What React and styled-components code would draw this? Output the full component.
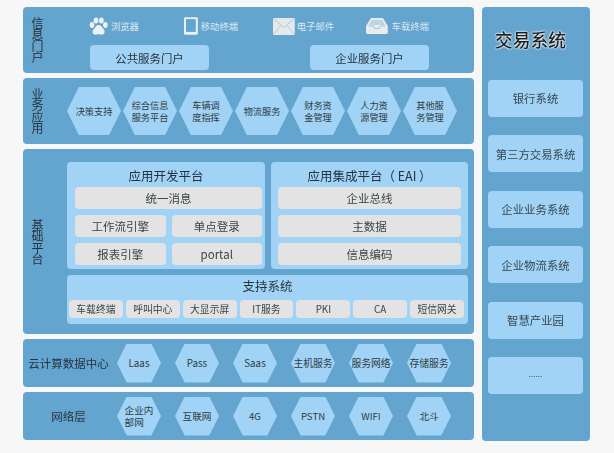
import React from "react";
import styled, { createGlobalStyle } from "styled-components";

const Global = createGlobalStyle`
  html, body { margin: 0; padding: 0; background: #f7f7f7; }
  body { width: 614px; height: 453px; overflow: hidden; font-family: "Noto Sans CJK SC", "Noto Sans", sans-serif; color: #2f3b44; }
`;

const Page = styled.div`
  display: flex;
  gap: 8px;
  padding: 7px 0 0 23px;
  width: 614px;
  height: 453px;
  box-sizing: border-box;
  filter: blur(0.35px);
`;
const LeftColumn = styled.div`
  width: 451px;
  display: flex;
  flex-direction: column;
  gap: 5px;
`;
const Band = styled.section`
  height: ${(p) => p.$h}px;
  box-sizing: border-box;
  background: #64a5cf;
  border-radius: 4px;
  display: flex;
  align-items: ${(p) => p.$align || "stretch"};
`;
const SideLabel = styled.div`
  width: 44px;
  flex: none;
  align-self: stretch;
  display: flex;
  align-items: center;
  justify-content: center;
  box-sizing: border-box;
  font-size: 12px;
  letter-spacing: -0.5px;
  line-height: 12px;
  writing-mode: vertical-rl;
  text-orientation: upright;
  color: #26333d;
  padding-right: 16px;
`;
const WideLabel = styled.div`
  width: 94px;
  flex: none;
  padding-right: 3px;
  box-sizing: border-box;
  text-align: center;
  font-size: 11.5px;
  color: #26333d;
  white-space: nowrap;
`;
const PortalBody = styled.div`
  flex: 1;
  padding: 9px 0 0 22px;
`;
const ChannelRow = styled.div`
  display: flex;
  height: 29px;
  align-items: flex-start;
`;
const Channel = styled.div`
  display: flex;
  align-items: center;
  gap: ${(p) => p.$gap}px;
  width: ${(p) => p.$w}px;
  margin-left: ${(p) => p.$ml}px;
  height: 20px;
  font-size: 9.3px;
  color: #dbe8f1;
  white-space: nowrap;
`;
const PortalRow = styled.div`
  display: flex;
  gap: 101px;
  padding-left: 1px;
`;
const PortalButton = styled.div`
  width: 119px;
  height: 25px;
  background: #a0d3f6;
  border-radius: 4px;
  display: flex;
  align-items: center;
  justify-content: center;
  font-size: 11.4px;
  color: #27333c;
`;
const HexRow = styled.div`
  display: flex;
  align-items: center;
  gap: ${(p) => p.$gap}px;
`;
const Hex = styled.div`
  width: ${(p) => p.$w}px;
  height: ${(p) => p.$h}px;
  flex: none;
  background: #a0d3f6;
  clip-path: polygon(22% 0, 78% 0, 100% 50%, 78% 100%, 22% 100%, 0 50%);
  display: flex;
  align-items: center;
  justify-content: center;
  text-align: ${(p) => (p.$left ? "left" : "center")};
  font-size: ${(p) => p.$size}px;
  line-height: 12px;
  color: #2f3b44;
  white-space: pre-line;
`;
const FoundationBody = styled.div`
  flex: 1;
  padding: 13px 6px 0 0;
  display: flex;
  flex-direction: column;
  gap: 6px;
`;
const PlatformRow = styled.div`
  display: flex;
  gap: 6px;
`;
const Platform = styled.div`
  width: ${(p) => p.$w}px;
  height: 107px;
  box-sizing: border-box;
  background: #a0d3f6;
  border-radius: 4px;
  padding: ${(p) => p.$pad};
`;
const PanelTitle = styled.div`
  height: 26px;
  margin-bottom: -1px;
  padding-right: ${(p) => p.$inset || 0}px;
  display: flex;
  align-items: center;
  justify-content: center;
  font-size: 12.5px;
  color: #27333c;
  white-space: pre;
`;
const Stack = styled.div`
  display: grid;
  grid-template-columns: 1fr 1fr;
  gap: 6px;
`;
const Tile = styled.div`
  grid-column: ${(p) => (p.$wide ? "1 / -1" : "auto")};
  height: 22px;
  background: #e3e3e3;
  border-radius: 4px;
  display: flex;
  align-items: center;
  justify-content: center;
  font-size: 11.5px;
  color: #3a4347;
`;
const SupportPanel = styled.div`
  width: 401px;
  height: 49px;
  box-sizing: border-box;
  background: #a0d3f6;
  border-radius: 4px;
`;
const SupportTitle = styled(PanelTitle)`
  height: 21px;
  margin-bottom: 4px;
`;
const SupportRow = styled.div`
  display: flex;
  gap: 3px;
  padding: 0 4px 0 2px;
`;
const Chip = styled.div`
  flex: 1;
  height: 18px;
  background: #e3e3e3;
  border-radius: 4px;
  display: flex;
  align-items: center;
  justify-content: center;
  font-size: 9.8px;
  color: #3a4347;
  white-space: nowrap;
`;
const RightColumn = styled.aside`
  width: 108px;
  height: 434px;
  background: #64a5cf;
  border-radius: 4px;
  box-sizing: border-box;
  padding: 0 7px 0 6px;
`;
const RightTitle = styled.h2`
  margin: 0;
  height: 72.5px;
  padding: 0 10px 9px 0;
  box-sizing: border-box;
  display: flex;
  align-items: center;
  justify-content: center;
  font-size: 17.7px;
  font-weight: 500;
  color: #1d1f21;
  text-shadow: 0 0 2px #fff, 0 0 2px #fff, 0 0 1px #fff;
`;
const RightStack = styled.div`
  display: flex;
  flex-direction: column;
  gap: 18.5px;
`;
const RightItem = styled.div`
  height: 37px;
  background: #a0d3f6;
  border-radius: 4px;
  display: flex;
  align-items: center;
  justify-content: center;
  font-size: ${(p) => (p.$dots ? 8 : 11.4)}px;
  padding-bottom: ${(p) => (p.$dots ? 4 : 0)}px;
  box-sizing: border-box;
  color: #38464f;
  white-space: nowrap;
`;

const Paw = () => (
  <svg width="19" height="19" viewBox="0 0 19 19" fill="#eef1f3">
    <ellipse cx="3" cy="8" rx="2.3" ry="3" />
    <ellipse cx="7" cy="3.4" rx="2.4" ry="3" />
    <ellipse cx="12.4" cy="3.4" rx="2.4" ry="3" />
    <ellipse cx="16.4" cy="8" rx="2.3" ry="3" />
    <path d="M9.6 8c2.2 0 3.2 2 4.4 3.4 1.4 1.6 2 2.6 1.4 4.4-.6 1.8-2.6 2-3.6 1.8-1-.2-1.6-.4-2.2-.4s-1.4.2-2.4.4c-1.4.2-3-.2-3.5-1.8-.5-1.8.3-3 1.7-4.4C6.6 10 7.4 8 9.6 8z" />
  </svg>
);
const Tablet = () => (
  <svg width="14" height="18" viewBox="0 0 14 18">
    <rect x="0" y="0" width="14" height="18" rx="1.5" fill="#eef1f3" />
    <rect x="2" y="2" width="10" height="13" fill="#64a5cf" />
  </svg>
);
const Mail = () => (
  <svg width="22" height="17" viewBox="0 0 22 17">
    <rect x="0" y="0" width="22" height="17" rx="1" fill="#e6e8ea" />
    <path d="M0.5 0.5L11 9.5L21.5 0.5M0.5 16.5L8 7.5M21.5 16.5L14 7.5" fill="none" stroke="#9fc4de" strokeWidth="0.8" />
  </svg>
);
const Tray = () => (
  <svg width="22" height="16" viewBox="0 0 22 16">
    <path d="M5 0H17L22 8V14.5Q22 16 20.5 16H1.5Q0 16 0 14.5V8Z" fill="#e9ebed" />
    <path d="M5.5 2H16.5L19 7H3Z" fill="#b9d5e8" />
    <path d="M2.5 8H7.5L8.5 10.5H13.5L14.5 8H19.5" fill="none" stroke="#8fb9d6" strokeWidth="0.8" />
  </svg>
);

const channels = [
  { icon: <Paw />, text: "浏览器", ml: 0, w: 50, gap: 3 },
  { icon: <Tablet />, text: "移动终端", ml: 45, w: 54, gap: 3 },
  { icon: <Mail />, text: "电子邮件", ml: 35, w: 61, gap: 2 },
  { icon: <Tray />, text: "车载终端", ml: 32, w: 63, gap: 4 },
];
const apps = ["决策支持", "综合信息\n服务平台", "车辆调\n度指挥", "物流服务", "财务资\n金管理", "人力资\n源管理", "其他服\n务管理"];
const cloud = ["Laas", "Pass", "Saas", "主机服务", "服务网络", "存储服务"];
const network = ["企业内\n部网", "互联网", "4G", "PSTN", "WIFI", "北斗"];
const support = ["车载终端", "呼叫中心", "大显示屏", "IT服务", "PKI", "CA", "短信网关"];
const trade = ["银行系统", "第三方交易系统", "企业业务系统", "企业物流系统", "智慧产业园", "......"];

export default function App() {
  return (
    <Page>
      <Global />
      <LeftColumn>
        <Band $h={66}>
          <SideLabel>信息门户</SideLabel>
          <PortalBody>
            <ChannelRow>
              {channels.map((c) => (
                <Channel key={c.text} $ml={c.ml} $w={c.w} $gap={c.gap}>
                  {c.icon}
                  <span>{c.text}</span>
                </Channel>
              ))}
            </ChannelRow>
            <PortalRow>
              <PortalButton>公共服务门户</PortalButton>
              <PortalButton>企业服务门户</PortalButton>
            </PortalRow>
          </PortalBody>
        </Band>
        <Band $h={66} $align="center">
          <SideLabel>业务应用</SideLabel>
          <HexRow $gap={2}>
            {apps.map((t) => (
              <Hex key={t} $w={54} $h={48} $size={9.2}>{t}</Hex>
            ))}
          </HexRow>
        </Band>
        <Band $h={185}>
          <SideLabel>基础平台</SideLabel>
          <FoundationBody>
            <PlatformRow>
              <Platform $w={198} $pad="0 3px 0 8px">
                <PanelTitle $inset={5}>应用开发平台</PanelTitle>
                <Stack>
                  <Tile $wide>统一消息</Tile>
                  <Tile>工作流引擎</Tile>
                  <Tile>单点登录</Tile>
                  <Tile>报表引擎</Tile>
                  <Tile>portal</Tile>
                </Stack>
              </Platform>
              <Platform $w={197} $pad="0 7px 0 7px">
                <PanelTitle>应用集成平台（ EAI ）</PanelTitle>
                <Stack>
                  <Tile $wide>企业总线</Tile>
                  <Tile $wide>主数据</Tile>
                  <Tile $wide>信息编码</Tile>
                </Stack>
              </Platform>
            </PlatformRow>
            <SupportPanel>
              <SupportTitle>支持系统</SupportTitle>
              <SupportRow>
                {support.map((t) => (
                  <Chip key={t}>{t}</Chip>
                ))}
              </SupportRow>
            </SupportPanel>
          </FoundationBody>
        </Band>
        <Band $h={48} $align="center">
          <WideLabel>云计算数据中心</WideLabel>
          <HexRow $gap={14}>
            {cloud.map((t) => (
              <Hex key={t} $w={44} $h={39} $size={9.8}>{t}</Hex>
            ))}
          </HexRow>
        </Band>
        <Band $h={48} $align="center">
          <WideLabel>网络层</WideLabel>
          <HexRow $gap={14}>
            {network.map((t) => (
              <Hex key={t} $w={44} $h={39} $size={9.6} $left={t.includes("\n")}>{t}</Hex>
            ))}
          </HexRow>
        </Band>
      </LeftColumn>
      <RightColumn>
        <RightTitle>交易系统</RightTitle>
        <RightStack>
          {trade.map((t) => (
            <RightItem key={t} $dots={t === "......"}>{t}</RightItem>
          ))}
        </RightStack>
      </RightColumn>
    </Page>
  );
}
